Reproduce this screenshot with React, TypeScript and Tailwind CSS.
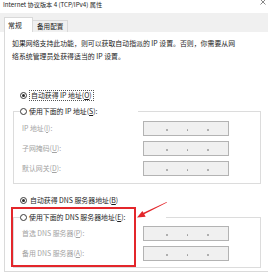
import React from 'react';

function Radio({ checked }: { checked?: boolean }) {
  return (
    <span className="w-[7px] h-[7px] rounded-full border border-[#3a3a3a] bg-white flex items-center justify-center shrink-0">
      {checked && <span className="w-[3px] h-[3px] rounded-full bg-[#2a2a2a]" />}
    </span>
  );
}

function Key({ k }: { k: string }) {
  return (
    <>
      (<span className="underline underline-offset-[1px]">{k}</span>)
    </>
  );
}

function IpBox() {
  return (
    <div className="w-[86px] h-[15px] border border-[#b3b3b3] bg-[#f0f0f0] flex items-center pl-[22px] gap-[19px]">
      <span className="w-[1.5px] h-[1.5px] mt-[3px] rounded-full bg-[#9a9a9a]" />
      <span className="w-[1.5px] h-[1.5px] mt-[3px] rounded-full bg-[#9a9a9a]" />
      <span className="w-[1.5px] h-[1.5px] mt-[3px] rounded-full bg-[#9a9a9a]" />
    </div>
  );
}

function Field({ label, k }: { label: string; k: string }) {
  return (
    <div className="h-[15px] flex items-center">
      <span className="w-[121px] text-[#a3a3a3] whitespace-nowrap">
        {label}
        <Key k={k} />:
      </span>
      <IpBox />
    </div>
  );
}

export default function App() {
  return (
    <div className="relative w-[268px] h-[274px] overflow-hidden bg-white font-['Noto_Sans_CJK_SC',sans-serif] text-[6.9px] leading-[13px] text-[#1c1c1c]">
      {/* title bar */}
      <div className="h-[13px] flex items-start justify-between pl-[3px] pr-[2px]">
        <span className="text-[6.2px] leading-[10px] whitespace-nowrap">Internet 协议版本 4 (TCP/IPv4) 属性</span>
        <svg width="6" height="6" viewBox="0 0 6 6" className="-mt-[1px]">
          <path d="M0.5 0.5L5.5 5.5M5.5 0.5L0.5 5.5" stroke="#555" strokeWidth="0.7" />
        </svg>
      </div>

      {/* tabs */}
      <div className="h-[19px] bg-[#f0f0f0] flex items-end pl-[4px]">
        <div className="h-[15px] w-[29px] bg-white border border-b-0 border-[#d9d9d9] pl-[3px] pt-[1px] leading-[12px]">
          常规
        </div>
        <div className="h-[12px] w-[35px] border border-b-0 border-l-0 border-[#d9d9d9] bg-[#f0f0f0] pl-[4px] leading-[11px] text-[6.6px]">
          备用配置
        </div>
      </div>

      {/* tab page */}
      <div className="ml-[4px] h-[240px] border-l border-b border-[#dadada] flex flex-col">
        <div className="pl-[7px] pt-[5px] whitespace-nowrap">
          <div>如果网络支持此功能，则可以获取自动指派的 IP 设置。否则，你需要从网</div>
          <div>络系统管理员处获得适当的 IP 设置。</div>
        </div>

        <div className="mt-[24px] h-[16px] flex items-center pl-[15px] gap-[2px]">
          <Radio checked />
          <span className="border border-dotted border-[#555] px-[1px] leading-[9px] whitespace-nowrap">
            自动获得 IP 地址<Key k="O" />
          </span>
        </div>

        <fieldset className="ml-[8px] w-[248px] border border-[#dcdcdc] pl-[8px] pt-[2px] pb-[7px] flex flex-col gap-[5px]">
          <legend className="-ml-[2px] w-[118px] h-[16px] flex items-center gap-[2px] whitespace-nowrap">
            <Radio />
            <span>
              使用下面的 IP 地址<Key k="S" />:
            </span>
          </legend>
          <Field label="IP 地址" k="I" />
          <Field label="子网掩码" k="U" />
          <Field label="默认网关" k="D" />
        </fieldset>

        <div className="mt-[8px] h-[16px] flex items-center pl-[15px] gap-[3px] whitespace-nowrap">
          <Radio checked />
          <span>
            自动获得 DNS 服务器地址<Key k="B" />
          </span>
        </div>

        <fieldset className="mt-[1px] ml-[8px] w-[248px] border border-[#dcdcdc] pl-[8px] pt-[1px] pb-[6px] flex flex-col gap-[5px]">
          <legend className="-ml-[2px] w-[146px] h-[16px] flex items-center gap-[2px] whitespace-nowrap">
            <Radio />
            <span>
              使用下面的 DNS 服务器地址<Key k="E" />:
            </span>
          </legend>
          <Field label="首选 DNS 服务器" k="P" />
          <Field label="备用 DNS 服务器" k="A" />
        </fieldset>
      </div>

      {/* annotation */}
      <div className="absolute left-[11px] top-[207px] w-[125px] h-[60px] border-2 border-[#e3262b]" />
      <svg
        className="absolute left-[130px] top-[196px]"
        width="40"
        height="26"
        viewBox="130 196 40 26"
      >
        <polygon points="166.6,201.9 167,202.6 143.6,214.6 142.9,213" fill="#e3262b" />
        <polygon points="137,217.6 142.4,210.9 145.7,216.8" fill="#e3262b" />
      </svg>
    </div>
  );
}
